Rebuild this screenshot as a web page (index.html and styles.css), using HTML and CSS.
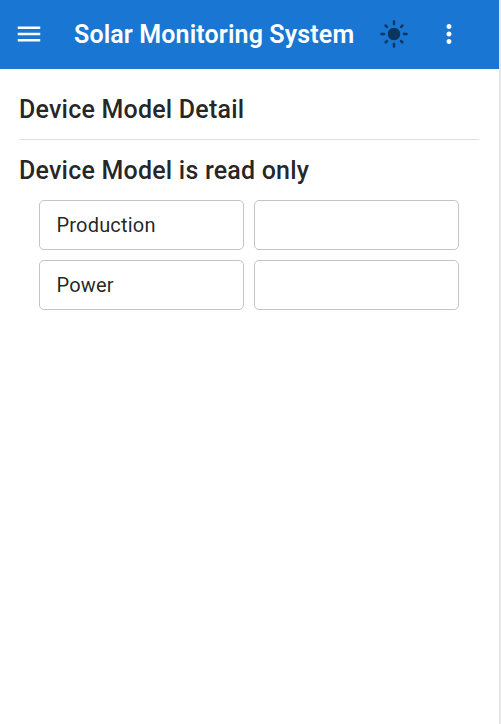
FILE: index.html
```html
<!DOCTYPE html>
<html lang="en">
<head>
<meta charset="utf-8">
<title>Solar Monitoring System</title>
<link rel="stylesheet" href="styles.css">
</head>
<body>
<div class="app">
  <header class="bar">
    <button class="icon-btn menu" aria-label="Menu"><svg viewBox="0 0 24 24"><path d="M3 18h18v-2H3v2zm0-5h18v-2H3v2zm0-7v2h18V6H3z"/></svg></button>
    <h1 class="brand">Solar Monitoring System</h1>
    <button class="icon-btn theme" aria-label="Theme"><svg viewBox="0 0 24 24"><path d="M12 7c-2.76 0-5 2.24-5 5s2.24 5 5 5 5-2.24 5-5-2.24-5-5-5zM2 13h2c.55 0 1-.45 1-1s-.45-1-1-1H2c-.55 0-1 .45-1 1s.45 1 1 1zm18 0h2c.55 0 1-.45 1-1s-.45-1-1-1h-2c-.55 0-1 .45-1 1s.45 1 1 1zM11 2v2c0 .55.45 1 1 1s1-.45 1-1V2c0-.55-.45-1-1-1s-1 .45-1 1zm0 18v2c0 .55.45 1 1 1s1-.45 1-1v-2c0-.55-.45-1-1-1s-1 .45-1 1zM5.99 4.58c-.39-.39-1.03-.39-1.41 0-.39.39-.39 1.03 0 1.41l1.06 1.06c.39.39 1.03.39 1.41 0s.39-1.03 0-1.41L5.99 4.58zm12.37 12.37c-.39-.39-1.03-.39-1.41 0-.39.39-.39 1.03 0 1.41l1.06 1.06c.39.39 1.03.39 1.41 0 .39-.39.39-1.03 0-1.41l-1.06-1.06zm1.06-10.96c.39-.39.39-1.03 0-1.41-.39-.39-1.03-.39-1.41 0l-1.06 1.06c-.39.39-.39 1.03 0 1.41s1.03.39 1.41 0l1.06-1.06zM7.05 18.36c.39-.39.39-1.03 0-1.41-.39-.39-1.03-.39-1.41 0l-1.06 1.06c-.39.39-.39 1.03 0 1.41s1.03.39 1.41 0l1.06-1.06z"/></svg></button>
    <button class="icon-btn more" aria-label="More"><svg viewBox="0 0 24 24"><path d="M12 8c1.100 0 2-.9 2-2s-.9-2-2-2-2 .9-2 2 .9 2 2 2zm0 2c-1.100 0-2 .9-2 2s.9 2 2 2 2-.9 2-2-.9-2-2-2zm0 6c-1.100 0-2 .9-2 2s.9 2 2 2 2-.9 2-2-.9-2-2-2z"/></svg></button>
  </header>
  <main class="content">
    <h2 class="heading">Device Model Detail</h2>
    <hr class="divider">
    <h2 class="heading">Device Model is read only</h2>
    <div class="grid">
      <div class="cell">Production</div>
      <div class="cell"></div>
      <div class="cell">Power</div>
      <div class="cell"></div>
    </div>
  </main>
</div>
</body>
</html>
```
FILE: styles.css
```css
* {
  box-sizing: border-box;
}

body {
  margin: 0;
  background: #fff;
  color: rgba(0, 0, 0, 0.87);
  font-family: Roboto, "Liberation Sans", sans-serif;
}

.app {
  height: 724px;
  border-right: 2px solid #e6e6e6;
}

.bar {
  display: flex;
  align-items: center;
  height: 69px;
  padding: 0 20px 1px 14px;
  background: #1976d2;
  color: #fff;
}

.icon-btn {
  display: flex;
  flex: none;
  padding: 0;
  border: 0;
  background: none;
  color: inherit;
}

.icon-btn svg {
  width: 30px;
  height: 30px;
  fill: currentColor;
}

.brand {
  flex: none;
  width: 305px;
  margin: 0;
  padding: 2px 0 0 30px;
  font-size: 25px;
  font-weight: 600;
  line-height: 40px;
  letter-spacing: 0.13px;
  white-space: nowrap;
}

.theme {
  margin-left: 30px;
  color: rgba(0, 0, 0, 0.54);
}

.more {
  margin-left: 25px;
}

.content {
  padding: 20px 20px 0 19px;
}

.heading {
  margin: 0;
  padding-top: 1px;
  font-size: 25px;
  font-weight: 500;
  line-height: 40px;
  letter-spacing: 0.21px;
}

.divider {
  height: 1px;
  margin: 9px 0 10px;
  border: 0;
  background: #e0e0e0;
}

.grid {
  display: grid;
  grid-template-columns: 1fr 1fr;
  grid-auto-rows: 50px;
  gap: 10px;
  padding: 9px 20px 0;
}

.cell {
  display: flex;
  align-items: center;
  padding: 0 16.5px;
  border: 1px solid #c4c4c4;
  border-radius: 5px;
  font-size: 20px;
  letter-spacing: 0.1876px;
}
```
